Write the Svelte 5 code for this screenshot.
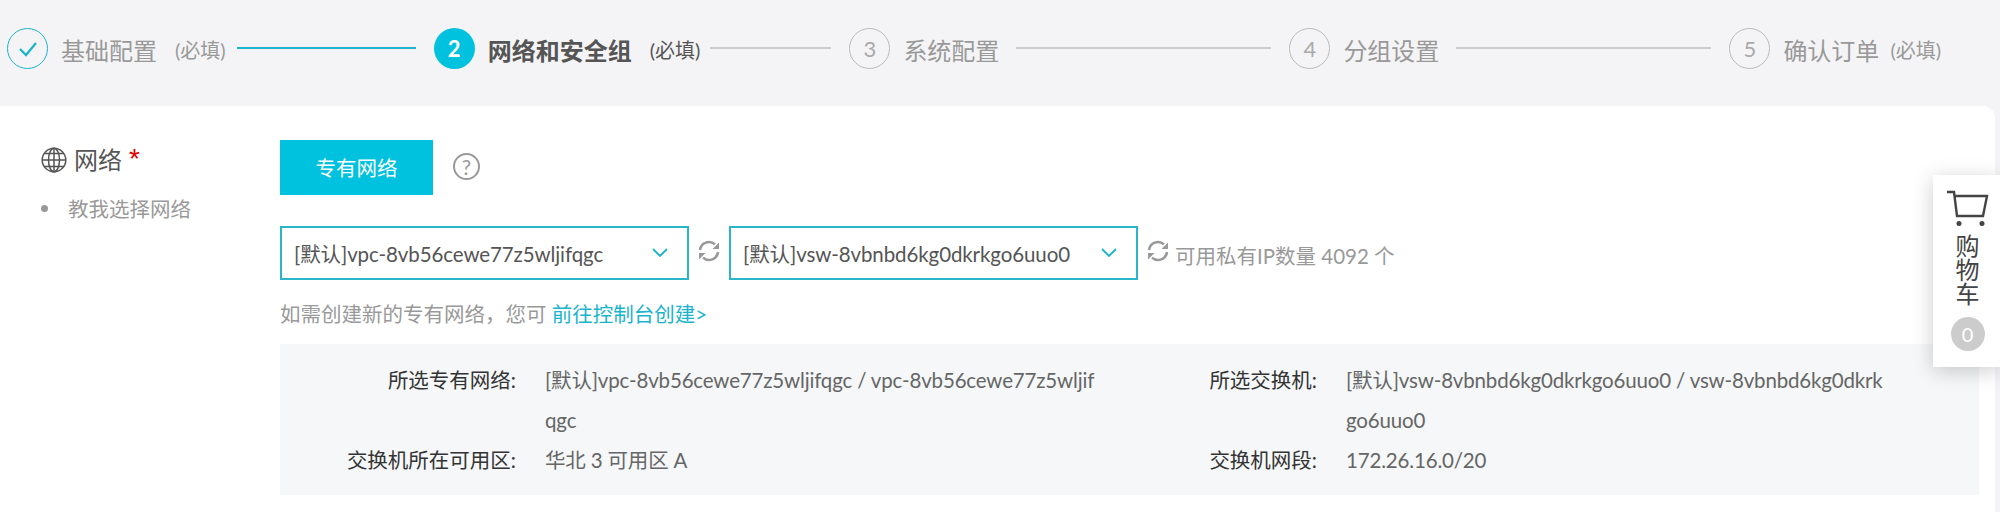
<script>
  const steps = [
    { n: 1, label: '基础配置', req: 18, done: true, line: 179, lineLeft: 11, lineOn: true },
    { n: 2, label: '网络和安全组', req: 18, active: true, line: 121, lineLeft: 10 },
    { n: 3, label: '系统配置', line: 255, lineLeft: 17 },
    { n: 4, label: '分组设置', line: 255, lineLeft: 17 },
    { n: 5, label: '确认订单', req: 11 }
  ];
</script>

<div class="page">
  <div class="steps">
    {#each steps as s}
      <div class="step" class:active={s.active} class:done={s.done}>
        <span class="num">
          {#if s.done}
            <svg width="20" height="16" viewBox="0 0 20 16"><path d="M2 8l6 6L18 2" fill="none" stroke="#1ab4cc" stroke-width="2.2"/></svg>
          {:else}
            {s.n}
          {/if}
        </span>
        <span class="label">{s.label}</span>
        {#if s.req}<span class="req" style="margin-left: {s.req}px">(必填)</span>{/if}
      </div>
      {#if s.line}
        <div class="line" class:on={s.lineOn} style="width: {s.line}px; margin-left: {s.lineLeft}px"></div>
      {/if}
    {/each}
  </div>

  <div class="card">
    <aside class="side">
      <div class="title">
        <svg class="globe" width="26" height="26" viewBox="0 0 26 26" fill="none" stroke="#555" stroke-width="1.5">
          <circle cx="13" cy="13" r="11.8"/>
          <ellipse cx="13" cy="13" rx="5.5" ry="11.8"/>
          <path d="M13 1v24M1.5 13h23M3.5 6.5h19M3.5 19.5h19"/>
        </svg>
        <span class="title-text">网络</span>
        <span class="star">*</span>
      </div>
      <div class="tip"><i></i>教我选择网络</div>
    </aside>

    <main class="body">
      <div class="type-row">
        <button class="type-btn">专有网络</button>
        <span class="help">?</span>
      </div>

      <div class="select-row">
        <div class="select">
          <span>[默认]vpc-8vb56cewe77z5wljifqgc</span>
          <svg width="16" height="10" viewBox="0 0 16 10"><path d="M1 1l7 7 7-7" fill="none" stroke="#1ab4cc" stroke-width="1.8"/></svg>
        </div>
        <svg class="refresh" width="24" height="24" viewBox="0 0 24 24" fill="none" stroke="#999" stroke-width="2.6">
          <path d="M3 11a9 9 0 0 1 15-5.6M21 13a9 9 0 0 1-15 5.6"/>
          <path d="M22 3.5v6.5h-6.5zM2 20.5V14h6.5z" fill="#999" stroke="none"/>
        </svg>
        <div class="select">
          <span>[默认]vsw-8vbnbd6kg0dkrkgo6uuo0</span>
          <svg width="16" height="10" viewBox="0 0 16 10"><path d="M1 1l7 7 7-7" fill="none" stroke="#1ab4cc" stroke-width="1.8"/></svg>
        </div>
        <svg class="refresh" width="24" height="24" viewBox="0 0 24 24" fill="none" stroke="#999" stroke-width="2.6">
          <path d="M3 11a9 9 0 0 1 15-5.6M21 13a9 9 0 0 1-15 5.6"/>
          <path d="M22 3.5v6.5h-6.5zM2 20.5V14h6.5z" fill="#999" stroke="none"/>
        </svg>
        <span class="count">可用私有IP数量 4092 个</span>
      </div>

      <p class="hint">如需创建新的专有网络，您可 <a href="#top">前往控制台创建&gt;</a></p>

      <div class="info">
        <div class="col">
          <div class="row">
            <span class="key">所选专有网络:</span>
            <span class="val">[默认]vpc-8vb56cewe77z5wljifqgc / vpc-8vb56cewe77z5wljif<br />qgc</span>
          </div>
          <div class="row">
            <span class="key">交换机所在可用区:</span>
            <span class="val">华北 3 可用区 A</span>
          </div>
        </div>
        <div class="col">
          <div class="row">
            <span class="key">所选交换机:</span>
            <span class="val">[默认]vsw-8vbnbd6kg0dkrkgo6uuo0 / vsw-8vbnbd6kg0dkrk<br />go6uuo0</span>
          </div>
          <div class="row">
            <span class="key">交换机网段:</span>
            <span class="val">172.26.16.0/20</span>
          </div>
        </div>
      </div>
    </main>
  </div>

  <div class="cart">
    <svg width="42" height="37" viewBox="0 0 42 37" fill="none" stroke="#444" stroke-width="2.4">
      <path d="M0 2h7l3 24h26l4-20H8"/>
      <circle cx="12" cy="33.5" r="2.5" fill="#444" stroke="none"/>
      <circle cx="35" cy="33.5" r="2.5" fill="#444" stroke="none"/>
    </svg>
    <div class="cart-text">购物车</div>
    <span class="badge">0</span>
  </div>
</div>

<style>
  :global(body) {
    margin: 0;
    background: #f4f4f6;
  }

  .page {
    height: 512px;
    overflow: hidden;
    position: relative;
    font-family: "Lato", "Noto Sans CJK SC", sans-serif;
    color: #555;
  }

  .steps {
    height: 106px;
    box-sizing: border-box;
    padding: 28px 0 0 7px;
    display: flex;
    align-items: flex-start;
  }

  .step {
    display: flex;
    align-items: center;
    height: 41px;
    color: #999;
  }

  .num {
    width: 41px;
    height: 41px;
    box-sizing: border-box;
    border: 1.5px solid #bbb;
    border-radius: 50%;
    display: flex;
    align-items: center;
    justify-content: center;
    font-size: 22px;
    color: #aaa;
    margin-right: 13px;
  }

  .done .num {
    border-color: #1ab4cc;
  }

  .active .num {
    background: #00c1de;
    border: none;
    color: #fff;
    font-weight: 700;
  }

  .label {
    font-size: 24px;
    position: relative;
    top: 1px;
  }

  .active .label {
    font-weight: 700;
    color: #555;
  }

  .req {
    font-size: 20px;
    position: relative;
    top: 1px;
  }

  .active .req {
    color: #555;
  }

  .line {
    height: 2px;
    background: #ccc;
    margin: 19px 18px 0 0;
  }

  .line.on {
    background: #1ab4cc;
  }

  .card {
    height: 406px;
    width: 1995px;
    background: #fff;
    border-radius: 0 12px 0 0;
    display: flex;
  }

  .side {
    width: 280px;
    flex: none;
    box-sizing: border-box;
    padding: 36px 0 0 41px;
  }

  .title {
    display: flex;
    align-items: center;
    font-size: 24px;
    gap: 7px;
    height: 36px;
  }

  .title-text {
    position: relative;
    top: -2px;
  }

  .star {
    color: #d00;
    font-family: "Liberation Sans", sans-serif;
    font-size: 28px;
    line-height: 28px;
    position: relative;
    top: -1px;
  }

  .tip {
    display: flex;
    align-items: center;
    font-size: 20.5px;
    color: #999;
    margin-top: 15px;
  }

  .tip i {
    width: 7px;
    height: 7px;
    border-radius: 50%;
    background: #999;
    margin: 0 20px 0 0;
  }

  .body {
    flex: 1;
    padding-top: 34px;
    padding-right: 16px;
    min-width: 0;
  }

  .type-row {
    display: flex;
    align-items: center;
    gap: 20px;
  }

  .type-btn {
    width: 153px;
    height: 55px;
    border: none;
    padding: 0 0 2px;
    background: #00c1de;
    color: #fff;
    font: inherit;
    font-size: 20.5px;
  }

  .help {
    width: 27px;
    height: 27px;
    box-sizing: border-box;
    border: 2px solid #999;
    border-radius: 50%;
    color: #999;
    font-size: 21px;
    display: flex;
    align-items: center;
    justify-content: center;
    position: relative;
    top: -1px;
  }

  .select-row {
    display: flex;
    align-items: center;
    margin-top: 31px;
  }

  .select {
    width: 409px;
    height: 54px;
    box-sizing: border-box;
    border: 2.5px solid #2bb5c9;
    display: flex;
    align-items: center;
    justify-content: space-between;
    padding: 0 19px 0 12px;
    font-size: 20.5px;
    letter-spacing: -0.1px;
    color: #555;
  }

  .refresh {
    margin: -4px 8px 0;
    flex: none;
  }

  .count {
    font-size: 20.5px;
    color: #999;
    margin-left: -3px;
    position: relative;
    top: 2px;
  }

  .hint {
    margin: 19px 0 0;
    font-size: 20.5px;
    line-height: 30px;
    color: #999;
  }

  .hint a {
    color: #1ab4cc;
    text-decoration: none;
  }

  .info {
    margin-top: 15px;
    height: 151px;
    box-sizing: border-box;
    background: #f5f7f8;
    padding: 16px 0 0;
    display: flex;
  }

  .col {
    width: 801px;
    flex: none;
  }

  .row {
    display: flex;
    font-size: 20.5px;
    line-height: 40px;
  }

  .key {
    width: 236px;
    margin-right: 29px;
    flex: none;
    text-align: right;
    color: #333;
    white-space: nowrap;
  }

  .val {
    white-space: nowrap;
    letter-spacing: -0.17px;
    color: #666;
  }

  .cart {
    position: absolute;
    right: 0;
    top: 175px;
    width: 67px;
    height: 192px;
    background: #fff;
    box-shadow: 0 4px 20px rgba(0, 0, 0, 0.2);
    display: flex;
    flex-direction: column;
    align-items: center;
    box-sizing: border-box;
    padding: 15px 0 0 2px;
  }

  .cart-text {
    width: 25px;
    margin-top: 7px;
    font-size: 24px;
    line-height: 24px;
    text-align: center;
    color: #444;
  }

  .badge {
    margin-top: 11px;
    width: 34px;
    height: 34px;
    border-radius: 50%;
    background: #ccc;
    color: #fff;
    font-size: 20px;
    display: flex;
    align-items: center;
    justify-content: center;
  }
</style>
